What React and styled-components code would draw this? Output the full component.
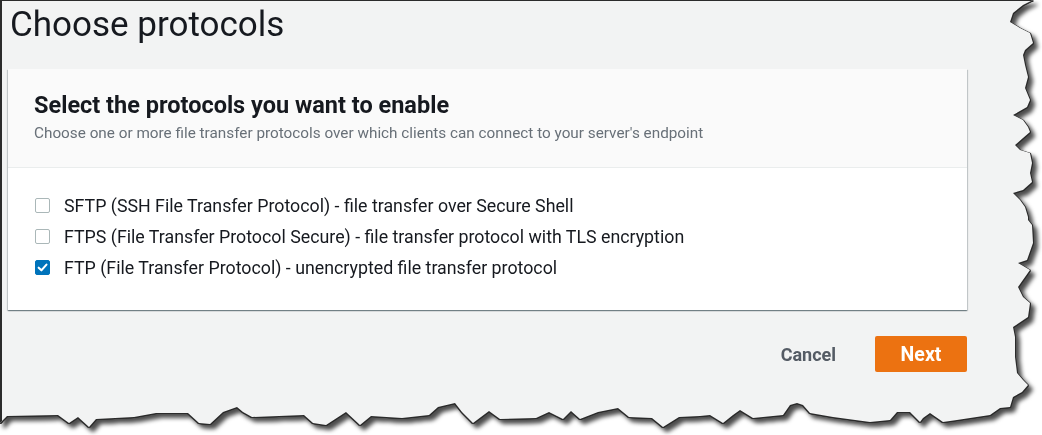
import React from 'react';
import styled, { createGlobalStyle } from 'styled-components';

const GlobalStyle = createGlobalStyle`
  html, body {
    margin: 0;
    padding: 0;
    background: #ffffff;
  }
  body {
    font-family: Roboto, "Liberation Sans", Arial, sans-serif;
    color: #16191f;
  }
`;

// torn paper outline of the screenshot sheet
const torn = [
  [0, 0], [1033, 0], [1023, 5], [1013, 13], [1010, 22], [1020, 28], [1030, 33], [1033, 43],
  [1025, 50], [1023, 55], [1025, 65], [1028, 77], [1025, 88], [1030, 100], [1027, 107],
  [1013, 115], [1023, 120], [1028, 127], [1030, 132], [1023, 138], [1015, 145], [1020, 150],
  [1030, 153], [1032, 163], [1030, 173], [1032, 182], [1023, 190], [1013, 193], [1020, 200],
  [1025, 207], [1028, 217], [1028, 220], [1032, 225], [1033, 243], [1027, 260], [1018, 263],
  [1030, 270], [1018, 287], [1023, 297], [1030, 303], [1028, 317], [1013, 327], [1015, 337],
  [1015, 357], [1017, 373], [1023, 380], [1028, 385], [1022, 392], [1013, 397], [1010, 407],
  [1000, 408], [990, 415], [957, 420], [943, 422], [930, 413], [923, 418], [920, 422],
  [910, 412], [897, 412], [890, 420], [870, 422], [833, 417], [810, 413], [803, 405],
  [797, 403], [790, 405], [783, 415], [763, 417], [753, 418], [740, 410], [733, 415],
  [723, 423], [710, 415], [700, 416], [679, 417], [663, 427], [652, 418], [629, 417],
  [618, 408], [598, 412], [580, 419], [571, 411], [563, 419], [549, 412], [536, 418],
  [500, 419], [489, 411], [473, 423], [462, 412], [455, 403], [438, 407], [429, 415],
  [402, 418], [371, 416], [360, 425], [346, 412], [326, 425], [313, 423], [304, 415],
  [252, 417], [243, 412], [237, 407], [223, 412], [210, 424], [199, 423], [188, 413],
  [156, 413], [134, 417], [96, 419], [89, 427], [78, 417], [69, 423], [58, 415],
  [7, 416], [0, 423],
].map(([x, y]) => `${x}px ${y}px`).join(', ');

const Shadow = styled.div`
  width: 1042px;
  height: 435px;
  filter: drop-shadow(1px 0 0 #2b2b2b) drop-shadow(0 1px 0 #2b2b2b)
    drop-shadow(-1px 0 0 #2b2b2b) drop-shadow(4px 4px 2px rgba(0, 0, 0, 0.7));
`;

const Sheet = styled.div`
  box-sizing: border-box;
  width: 1042px;
  height: 435px;
  background: #f2f3f3;
  border-top: 1px solid #2b2b2b;
  border-left: 2px solid #2b2b2b;
  clip-path: polygon(${torn});
  display: flex;
  flex-direction: column;
`;

const Title = styled.h1`
  margin: 0;
  padding-left: 8px;
  font-size: 35px;
  font-weight: 400;
  line-height: 47px;
  color: #16191f;
`;

const Content = styled.div`
  width: 959px;
  margin-left: 6px;
  margin-top: 21px;
  display: flex;
  flex-direction: column;
`;

const Card = styled.section`
  background: #ffffff;
  box-shadow: 0 1px 1px 0 rgba(0, 28, 36, 0.35), 1px 1px 1px 0 rgba(0, 28, 36, 0.15),
    -1px 1px 1px 0 rgba(0, 28, 36, 0.15);
`;

const CardHeader = styled.header`
  background: #fafafa;
  border-bottom: 1px solid #eaeded;
  padding: 22px 26px 24px;
  display: flex;
  flex-direction: column;
  gap: 4px;
`;

const Heading = styled.h2`
  margin: 0;
  font-size: 23.5px;
  font-weight: 700;
  line-height: 28px;
  color: #16191f;
`;

const Description = styled.p`
  margin: 0;
  font-size: 15.3px;
  line-height: 20px;
  color: #687078;
`;

const CardBody = styled.div`
  padding: 22px 27px 27px;
  display: flex;
  flex-direction: column;
`;

const Option = styled.label`
  display: flex;
  align-items: center;
  gap: 14px;
  height: 31px;
  font-size: 17.8px;
  color: #16191f;
`;

const Box = styled.span`
  box-sizing: border-box;
  width: 15px;
  height: 15px;
  border-radius: 2px;
  border: 1px solid ${(p) => (p.$checked ? '#0073bb' : '#aab7b8')};
  background: ${(p) => (p.$checked ? '#0073bb' : '#ffffff')};
  display: flex;
  align-items: center;
  justify-content: center;
`;

const Footer = styled.div`
  margin-top: 26px;
  display: flex;
  justify-content: flex-end;
  align-items: center;
  gap: 19px;
`;

const LinkButton = styled.button`
  border: none;
  background: none;
  padding: 0 20px;
  height: 36px;
  font-family: inherit;
  font-size: 18px;
  font-weight: 700;
  color: #545b64;
`;

const PrimaryButton = styled.button`
  border: none;
  border-radius: 2px;
  width: 92px;
  height: 36px;
  background: #ec7211;
  color: #ffffff;
  font-family: inherit;
  font-size: 19.5px;
  font-weight: 700;
`;

const protocols = [
  { id: 'sftp', label: 'SFTP (SSH File Transfer Protocol) - file transfer over Secure Shell', checked: false },
  { id: 'ftps', label: 'FTPS (File Transfer Protocol Secure) - file transfer protocol with TLS encryption', checked: false },
  { id: 'ftp', label: 'FTP (File Transfer Protocol) - unencrypted file transfer protocol', checked: true },
];

function Checkbox({ checked }) {
  return (
    <Box $checked={checked}>
      {checked && (
        <svg width="11" height="11" viewBox="0 0 10 10">
          <path d="M1.5 5.2 L4 7.6 L8.6 2.4" fill="none" stroke="#fff" strokeWidth="1.9" strokeLinecap="round" strokeLinejoin="round" />
        </svg>
      )}
    </Box>
  );
}

export default function App() {
  return (
    <>
      <GlobalStyle />
      <Shadow>
        <Sheet>
          <Title>Choose protocols</Title>
          <Content>
            <Card>
              <CardHeader>
                <Heading>Select the protocols you want to enable</Heading>
                <Description>
                  Choose one or more file transfer protocols over which clients can connect to your server's endpoint
                </Description>
              </CardHeader>
              <CardBody>
                {protocols.map((p) => (
                  <Option key={p.id}>
                    <Checkbox checked={p.checked} />
                    {p.label}
                  </Option>
                ))}
              </CardBody>
            </Card>
            <Footer>
              <LinkButton>Cancel</LinkButton>
              <PrimaryButton>Next</PrimaryButton>
            </Footer>
          </Content>
        </Sheet>
      </Shadow>
    </>
  );
}
